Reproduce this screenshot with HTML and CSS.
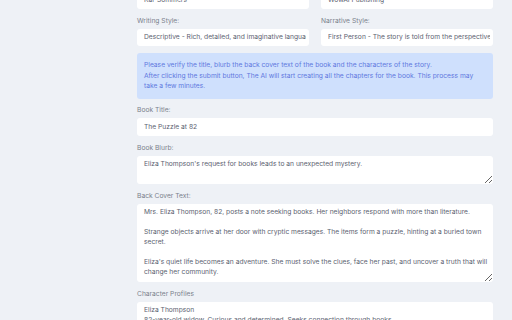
FILE: index.html
```html
<!DOCTYPE html>
<html lang="en">
<head>
    <meta charset="UTF-8">
    <meta name="viewport" content="width=device-width, initial-scale=1.0">
    <title>Book Details</title>
    <link rel="stylesheet" href="styles.css">
</head>
<body>
    <div class="page">
        <div class="book-form">
            <div class="row">
                <div class="field">
                    <label>Author Name:</label>
                    <input type="text" value="Kai-Sommers">
                </div>
                <div class="field">
                    <label>Publisher:</label>
                    <input type="text" value="WowAI Publishing">
                </div>
            </div>
            <div class="row">
                <div class="field">
                    <label>Writing Style:</label>
                    <input type="text" value="Descriptive - Rich, detailed, and imaginative language">
                </div>
                <div class="field">
                    <label>Narrative Style:</label>
                    <input type="text" value="First Person - The story is told from the perspective of the main character">
                </div>
            </div>
            <div class="notice">
                Please verify the title, blurb the back cover text of the book and the characters of the story.<br>
                After clicking the submit button, The AI will start creating all the chapters for the book. This process may take a few minutes.
            </div>
            <div class="field">
                <label>Book Title:</label>
                <input type="text" value="The Puzzle at 82">
            </div>
            <div class="field">
                <label>Book Blurb:</label>
                <textarea rows="2">Eliza Thompson's request for books leads to an unexpected mystery.</textarea>
            </div>
            <div class="field">
                <label>Back Cover Text:</label>
                <textarea rows="7">Mrs. Eliza Thompson, 82, posts a note seeking books. Her neighbors respond with more than literature.

Strange objects arrive at her door with cryptic messages. The items form a puzzle, hinting at a buried town secret.

Eliza's quiet life becomes an adventure. She must solve the clues, face her past, and uncover a truth that will change her community.</textarea>
            </div>
            <div class="field">
                <label>Character Profiles</label>
                <textarea rows="6">Eliza Thompson
82-year-old widow. Curious and determined. Seeks connection through books.

Tom Baker
Local bookstore owner. Friendly, knows everyone in town.</textarea>
            </div>
        </div>
    </div>
</body>
</html>
```

FILE: styles.css
```css
body {
    margin: 0;
    background: #eef1f6;
    font-family: 'Inter', 'Liberation Sans', sans-serif;
    font-size: 6.7px;
    color: #5b6270;
    overflow: hidden;
}
.page {
    padding-left: 137px;
}
.book-form {
    width: 356px;
    margin-top: -22px;
}
.row {
    display: grid;
    grid-template-columns: 1fr 1fr;
    gap: 12px;
}
.field {
    margin-bottom: 7px;
}
label {
    display: block;
    line-height: 10px;
    margin-bottom: 3px;
    color: #7b818c;
}
input, textarea {
    display: block;
    box-sizing: border-box;
    width: 100%;
    border: none;
    border-radius: 3px;
    background: #fff;
    font-family: inherit;
    font-size: 6.7px;
    line-height: 10px;
    color: #5b6270;
    padding: 4px 3px 4px 7px;
    margin: 0;
}
input {
    height: 17.5px;
}
textarea {
    resize: vertical;
    padding: 3px 4px 5px 7px;
}
.notice {
    background: #cfe0fd;
    color: #6078e0;
    border-radius: 3px;
    padding: 7px;
    line-height: 10.5px;
    margin-bottom: 6.5px;
}
```
